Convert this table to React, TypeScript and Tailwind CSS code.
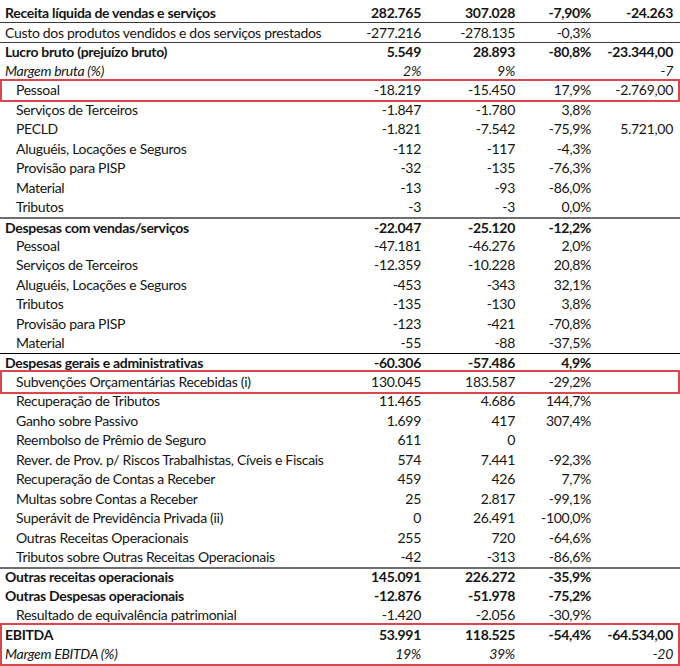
type Row = {
  label: string;
  a?: string;
  b?: string;
  c?: string;
  d?: string;
  kind?: 'bold' | 'italic' | 'sub';
  line?: 'thin' | 'thick' | 'black';
};

const top: Row[] = [
  { label: 'Receita líquida de vendas e serviços', a: '282.765', b: '307.028', c: '-7,90%', d: '-24.263', kind: 'bold' },
  { label: 'Custo dos produtos vendidos e dos serviços prestados', a: '-277.216', b: '-278.135', c: '-0,3%', line: 'thin' },
  { label: 'Lucro bruto (prejuízo bruto)', a: '5.549', b: '28.893', c: '-80,8%', d: '-23.344,00', kind: 'bold', line: 'thin' },
  { label: 'Margem bruta (%)', a: '2%', b: '9%', d: '-7', kind: 'italic' },
];

const pessoal: Row = { label: 'Pessoal', a: '-18.219', b: '-15.450', c: '17,9%', d: '-2.769,00', kind: 'sub' };

const custos: Row[] = [
  { label: 'Serviços de Terceiros', a: '-1.847', b: '-1.780', c: '3,8%', kind: 'sub' },
  { label: 'PECLD', a: '-1.821', b: '-7.542', c: '-75,9%', d: '5.721,00', kind: 'sub' },
  { label: 'Aluguéis, Locações e Seguros', a: '-112', b: '-117', c: '-4,3%', kind: 'sub' },
  { label: 'Provisão para PISP', a: '-32', b: '-135', c: '-76,3%', kind: 'sub' },
  { label: 'Material', a: '-13', b: '-93', c: '-86,0%', kind: 'sub' },
  { label: 'Tributos', a: '-3', b: '-3', c: '0,0%', kind: 'sub' },
  { label: 'Despesas com vendas/serviços', a: '-22.047', b: '-25.120', c: '-12,2%', kind: 'bold', line: 'thick' },
  { label: 'Pessoal', a: '-47.181', b: '-46.276', c: '2,0%', kind: 'sub' },
  { label: 'Serviços de Terceiros', a: '-12.359', b: '-10.228', c: '20,8%', kind: 'sub' },
  { label: 'Aluguéis, Locações e Seguros', a: '-453', b: '-343', c: '32,1%', kind: 'sub' },
  { label: 'Tributos', a: '-135', b: '-130', c: '3,8%', kind: 'sub' },
  { label: 'Provisão para PISP', a: '-123', b: '-421', c: '-70,8%', kind: 'sub' },
  { label: 'Material', a: '-55', b: '-88', c: '-37,5%', kind: 'sub' },
  { label: 'Despesas gerais e administrativas', a: '-60.306', b: '-57.486', c: '4,9%', kind: 'bold', line: 'black' },
];

const subvencoes: Row = { label: 'Subvenções Orçamentárias Recebidas (i)', a: '130.045', b: '183.587', c: '-29,2%', kind: 'sub' };

const outras: Row[] = [
  { label: 'Recuperação de Tributos', a: '11.465', b: '4.686', c: '144,7%', kind: 'sub' },
  { label: 'Ganho sobre Passivo', a: '1.699', b: '417', c: '307,4%', kind: 'sub' },
  { label: 'Reembolso de Prêmio de Seguro', a: '611', b: '0', kind: 'sub' },
  { label: 'Rever. de Prov. p/ Riscos Trabalhistas, Cíveis e Fiscais', a: '574', b: '7.441', c: '-92,3%', kind: 'sub' },
  { label: 'Recuperação de Contas a Receber', a: '459', b: '426', c: '7,7%', kind: 'sub' },
  { label: 'Multas sobre Contas a Receber', a: '25', b: '2.817', c: '-99,1%', kind: 'sub' },
  { label: 'Superávit de Previdência Privada (ii)', a: '0', b: '26.491', c: '-100,0%', kind: 'sub' },
  { label: 'Outras Receitas Operacionais', a: '255', b: '720', c: '-64,6%', kind: 'sub' },
  { label: 'Tributos sobre Outras Receitas Operacionais', a: '-42', b: '-313', c: '-86,6%', kind: 'sub' },
  { label: 'Outras receitas operacionais', a: '145.091', b: '226.272', c: '-35,9%', kind: 'bold', line: 'thick' },
  { label: 'Outras Despesas operacionais', a: '-12.876', b: '-51.978', c: '-75,2%', kind: 'bold' },
  { label: 'Resultado de equivalência patrimonial', a: '-1.420', b: '-2.056', c: '-30,9%', kind: 'sub' },
];

const ebitda: Row[] = [
  { label: 'EBITDA', a: '53.991', b: '118.525', c: '-54,4%', d: '-64.534,00', kind: 'bold' },
  { label: 'Margem EBITDA (%)', a: '19%', b: '39%', d: '-20', kind: 'italic' },
];

function Line({ row }: { row: Row }) {
  const border =
    row.line === 'thin'
      ? 'border-t border-[#3a3a3a]'
      : row.line === 'thick'
        ? 'border-t-2 border-[#6e6e6e]'
        : row.line === 'black'
          ? 'border-t border-black'
          : '';
  const weight = row.kind === 'bold' ? 'font-bold' : row.kind === 'italic' ? 'italic' : '';
  return (
    <div className={`grid h-[19.45px] grid-cols-[340px_81px_94px_76px_82px_7px] items-center leading-none ${border} ${weight}`}>
      <div className={`whitespace-nowrap ${row.kind === 'sub' ? 'pl-[16px]' : 'pl-[5px]'}`}>{row.label}</div>
      <div className="text-right">{row.a}</div>
      <div className="text-right">{row.b}</div>
      <div className="text-right">{row.c}</div>
      <div className="text-right">{row.d}</div>
      <div />
    </div>
  );
}

function Boxed({ rows }: { rows: Row[] }) {
  return (
    <div className="mx-[2px] outline-2 outline-[#d9474d]">
      <div className="-mx-[2px]">
        {rows.map((r, i) => (
          <Line key={i} row={r} />
        ))}
      </div>
    </div>
  );
}

export default function App() {
  return (
    <div className="h-[666px] w-[680px] overflow-hidden bg-white pt-[3px] font-['Lato',sans-serif] text-[14px] tracking-[-0.3px] text-[#141414]">
      {top.map((r, i) => (
        <Line key={'t' + i} row={r} />
      ))}
      <Boxed rows={[pessoal]} />
      {custos.map((r, i) => (
        <Line key={'c' + i} row={r} />
      ))}
      <Boxed rows={[subvencoes]} />
      {outras.map((r, i) => (
        <Line key={'o' + i} row={r} />
      ))}
      <Boxed rows={ebitda} />
    </div>
  );
}
